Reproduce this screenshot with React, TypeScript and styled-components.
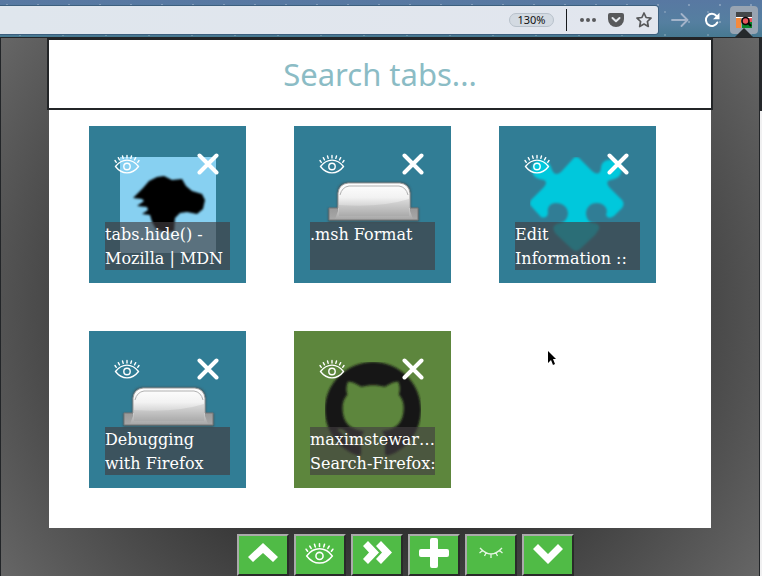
import React from "react";
import styled, { createGlobalStyle } from "styled-components";

const GlobalStyle = createGlobalStyle`
  * { box-sizing: border-box; }
  body { margin: 0; background: #f0f0f1; font-family: "DejaVu Serif", serif; overflow: hidden; }
  svg { display: block; }
`;

const Window = styled.div`
  min-height: 100vh;
  display: flex;
  flex-direction: column;
`;

const Toolbar = styled.header`
  position: relative;
  height: 37px;
  flex: none;
  display: flex;
  align-items: center;
  padding: 3px 4px 0 0;
  background:
    radial-gradient(circle at 7px 5px, #ffffff40 0 1px, transparent 1px) 0 0 / 31px 17px,
    radial-gradient(circle at 20px 12px, #ffffff30 0 1px, transparent 1px) 0 0 / 43px 23px,
    linear-gradient(180deg, #5878a2, #557fa0 60%, #477991);
`;

const AddressBar = styled.div`
  flex: 1;
  height: 28px;
  display: flex;
  align-items: center;
  justify-content: flex-end;
  border-radius: 0 3px 3px 0;
  background: linear-gradient(90deg, #dfe6ed, #e2e6ee);
  box-shadow: 0 0 0 1px #3c5f7e;
`;

const IconButton = styled.button<{ $width: number; $active?: boolean }>`
  width: ${(p) => p.$width}px;
  height: 28px;
  padding: 0;
  border: 0;
  border-radius: 4px;
  display: flex;
  align-items: center;
  justify-content: center;
  background: ${(p) => (p.$active ? "#98a4b2" : "transparent")};
`;

const ZoomLevel = styled.button`
  width: 45px;
  height: 14px;
  margin-right: 12px;
  padding: 0;
  border: 1px solid #b8c1cb;
  border-radius: 8px;
  background: #d3dae2;
  color: #111;
  font: 11px/12px "Noto Sans", sans-serif;
`;

const Divider = styled.span`
  width: 1px;
  height: 22px;
  margin-right: 7px;
  background: #16191c;
`;

const AddressGap = styled.span`
  width: 8px;
`;

const PopupArrow = styled.span`
  position: absolute;
  right: 9px;
  bottom: 0;
  border: solid transparent;
  border-width: 0 9px 9px;
  border-bottom-color: #25292c;
`;

const Popup = styled.main`
  flex: 1;
  margin-right: 2px;
  padding: 0 46px;
  display: flex;
  flex-direction: column;
  border: 1px solid #222528;
  border-bottom: 0;
  background: radial-gradient(circle, #000, #666);
`;

const Backdrop = styled.div`
  flex: 1;
  display: flex;
  flex-direction: column;
  background: linear-gradient(#25282b 0 74px, #f0f0f1 74px);
`;

const SearchInput = styled.input`
  width: 100%;
  height: 72px;
  padding: 0;
  border: 2px solid #232527;
  border-radius: 0;
  outline: 0;
  background: #fff;
  text-align: center;
  font: 31px/40px "Noto Sans", sans-serif;
  &::placeholder { color: #8bbcc5; opacity: 1; }
`;

const Panel = styled.section`
  flex: 1;
  margin: 0 2px;
  padding: 16px 40px 40px;
  background: #fff;
`;

const TabGrid = styled.ul`
  margin: 0;
  padding: 0;
  list-style: none;
  display: grid;
  grid-template-columns: repeat(auto-fill, 157px);
  gap: 48px;
`;

const Card = styled.li<{ $color: string }>`
  position: relative;
  height: 157px;
  padding: 24px 16px 13px;
  display: flex;
  flex-direction: column;
  justify-content: space-between;
  background: ${(p) => p.$color};
`;

const Favicon = styled.svg`
  position: absolute;
  left: 31px;
  top: 31px;
`;

const CardActions = styled.div`
  position: relative;
  display: flex;
  justify-content: space-between;
  padding: 0 11px 0 9px;
`;

const CardButton = styled.button`
  height: 28px;
  padding: 0;
  border: 0;
  background: none;
  display: flex;
  align-items: center;
  color: #fff;
`;

const Title = styled.p`
  position: relative;
  height: 48px;
  margin: 0;
  padding-top: 1px;
  white-space: pre;
  background: rgba(66, 62, 64, 0.65);
  color: #fff;
  font-size: 16px;
  line-height: 24px;
`;

const Actions = styled.nav`
  display: flex;
  justify-content: center;
  gap: 5px;
  padding: 6px 0 0 50px;
`;

const ActionButton = styled.button`
  width: 52px;
  height: 42px;
  padding: 0 0 4px;
  display: flex;
  align-items: center;
  justify-content: center;
  border: 2px solid;
  border-color: #aaa #292b29 #292b29 #aaa;
  background: #50bb46;
  color: #fff;
`;

const OpenEye = ({ width }: { width: number }) => (
  <svg width={width} height={(width * 20) / 26} viewBox="0 0 26 20" fill="none" stroke="currentColor" strokeLinecap="round">
    <path d="M1.500 12.500C8 4 18 4 24.500 12.500C18 21 8 21 1.500 12.500Z" strokeWidth="1.300" />
    <circle cx="13" cy="12.500" r="3.200" strokeWidth="1.400" />
    <path d="M2.300 8.300 1 6.500M5.500 5.800 4.300 3.700M9.200 4.400 8.500 2M13 4V1.500M16.800 4.400 17.500 2M20.500 5.800 21.700 3.700M23.700 8.300 25 6.500" strokeWidth="1.400" />
  </svg>
);

const ClosedEye = () => (
  <svg width="26" height="12" viewBox="0 0 26 12" fill="none" stroke="#e4f5e2" strokeWidth="1.300">
    <path d="M2 1Q13 13 24 1M4.500 3.500 1.500 6M8 6 6.500 9M13 7V11M18 6 19.500 9M21.500 3.500 24.500 6" />
  </svg>
);

const Cross = () => (
  <svg width="22" height="22" viewBox="0 0 22 22" stroke="currentColor" strokeWidth="4" strokeLinecap="round">
    <path d="M2.500 2.500 19.500 19.500M19.500 2.500 2.500 19.500" />
  </svg>
);

const Soften = ({ id }: { id: string }) => (
  <filter id={id}><feGaussianBlur stdDeviation="1" /></filter>
);

const MdnIcon = () => (
  <Favicon width="96" height="96" viewBox="0 0 96 96">
    <Soften id="mdn-soft" />
    <path fill="#87d0f1" d="M0 0H96V96H0Z" />
    <path filter="url(#mdn-soft)" d="M13 41 23 31 29 24 37 20 44 19 52 23 62 22 66 29 72 34 82 37 85 43 83 52 77 57 67 55 60 56 55 61 54 74 45 76 36 72 32 65 30 58 22 57 28 53 27 50 17 49 24 44 22 42Z" />
  </Favicon>
);

const DriveIcon = ({ id }: { id: string }) => (
  <Favicon width="96" height="96" viewBox="0 0 96 96">
    <defs>
      <linearGradient id={`${id}-body`} x2="0" y2="1">
        <stop stopColor="#fff" /><stop offset=".4" stopColor="#f2f2f2" /><stop offset="1" stopColor="#a8a8a8" />
      </linearGradient>
      <linearGradient id={`${id}-base`} x2="0" y2="1">
        <stop stopColor="#999" /><stop offset="1" stopColor="#a8a8a8" />
      </linearGradient>
      <filter id={`${id}-shadow`}><feGaussianBlur stdDeviation="1" /></filter>
    </defs>
    <path filter={`url(#${id}-shadow)`} fill="#3c5a64" d="M3 51H12V35Q13 26 22 25H76Q85 26 86 35V51H94V65H3Z" />
    <path fill={`url(#${id}-base)`} stroke="#777" d="M4 51H93V63H4Z" />
    <path fill={`url(#${id}-body)`} d="M13 54V36Q14 27 23 26H75Q84 27 85 36V54L88 62H10Z" />
    <path fill="none" stroke="#999" d="M13 51V36Q14 27 23 26H75Q84 27 85 36V51" />
    <path fill="none" stroke="#b0b0b0" d="M15 38Q17 30 24 29H74Q81 30 83 38" />
    <path fill="#888" opacity=".18" d="M14 48Q55 51 84 42V59H14Z" />
  </Favicon>
);

const PuzzleIcon = () => (
  <Favicon width="96" height="96" viewBox="0 0 96 96">
    <Soften id="puzzle-soft" />
    <path filter="url(#puzzle-soft)" fill="#00c8dc" d="M46 0Q49 0 51 3L62 14Q69 20 71 12C71 5 76 2 84 3C91 3 93 9 91 16C89 22 82 22 78 24Q76 27 80 31L92 43Q95 47 92 51L84 59Q78 63 76 58C79 52 74 46 67 46C58 46 54 54 57 61Q59 66 64 66Q70 67 69 72L65 78 50 92Q46 96 42 92L27 78Q22 73 24 69Q27 66 31 66Q37 64 38 57C38 50 33 46 26 46C19 46 17 52 18 56Q17 62 11 60L1 49Q-1 47 1 43L14 30Q18 25 14 23C7 22 3 20 2 14C1 7 5 3 11 3C18 3 20 7 22 13Q25 20 31 15L42 3Q44 0 46 0Z" />
  </Favicon>
);

const GithubIcon = () => (
  <Favicon width="96" height="96" viewBox="0 0 16 16">
    <filter id="github-soft"><feGaussianBlur stdDeviation=".14" /></filter>
    <path filter="url(#github-soft)" fill="#191717" d="M8 0C3.580 0 0 3.580 0 8c0 3.540 2.290 6.530 5.470 7.590.4.070.55-.17.55-.38 0-.19-.01-.82-.01-1.490-2.010.37-2.530-.49-2.690-.94-.09-.23-.48-.94-.82-1.130-.28-.15-.68-.52-.01-.53.63-.01 1.080.58 1.230.82.72 1.210 1.870.87 2.330.66.07-.52.28-.87.51-1.070-1.780-.2-3.640-.89-3.640-3.950 0-.87.31-1.590.82-2.150-.08-.2-.36-1.020.08-2.120 0 0 .67-.21 2.200.82.64-.18 1.320-.27 2-.27.68 0 1.360.09 2 .27 1.530-1.040 2.200-.82 2.200-.82.44 1.100.16 1.920.08 2.120.51.56.82 1.270.82 2.150 0 3.070-1.870 3.750-3.650 3.950.29.25.54.73.54 1.480 0 1.070-.01 1.930-.01 2.200 0 .21.15.46.55.38A8.013 8.013 0 0016 8c0-4.420-3.580-8-8-8z" />
  </Favicon>
);

const Pointer = styled.svg`
  position: fixed;
  left: 548px;
  top: 351px;
`;

const tabs = [
  { title: "tabs.hide() -\nMozilla | MDN", color: "#317d95", icon: <MdnIcon /> },
  { title: ".msh Format", color: "#317d95", icon: <DriveIcon id="format" /> },
  { title: "Edit\nInformation ::", color: "#317d95", icon: <PuzzleIcon /> },
  { title: "Debugging\nwith Firefox", color: "#317d95", icon: <DriveIcon id="debug" /> },
  { title: "maximstewar…\nSearch-Firefox:", color: "#5d863d", icon: <GithubIcon /> },
];

const Glyph = ({ d }: { d: string }) => (
  <svg width="32" height="32" viewBox="0 0 32 32" fill="currentColor"><path d={d} /></svg>
);

const actions = [
  { label: "Scroll up", icon: <Glyph d="M16 6 31 20 26 25 16 16 6 25 1 20Z" /> },
  { label: "Show tabs", icon: <OpenEye width={29} /> },
  { label: "Forward", icon: <Glyph d="M2 9 7 4 18 15.500 7 27 2 22 8 15.500ZM15 9 20 4 31 15.500 20 27 15 22 21 15.500Z" /> },
  { label: "New tab", icon: <Glyph d="M14 1H18Q20 1 20 3V12H29Q31 12 31 14V18Q31 20 29 20H20V29Q20 31 18 31H14Q12 31 12 29V20H3Q1 20 1 18V14Q1 12 3 12H12V3Q12 1 14 1Z" /> },
  { label: "Hide tabs", icon: <ClosedEye /> },
  { label: "Scroll down", icon: <Glyph d="M16 27 31 12 26 7 16 17 6 7 1 12Z" /> },
];

export default function App() {
  return (
    <Window>
      <GlobalStyle />
      <Toolbar>
        <AddressBar>
          <ZoomLevel>130%</ZoomLevel>
          <Divider />
          <IconButton $width={28} aria-label="Page actions">
            <svg width="16" height="4" viewBox="0 0 16 4" fill="#58595b">
              <circle cx="2" cy="2" r="2" /><circle cx="8" cy="2" r="2" /><circle cx="14" cy="2" r="2" />
            </svg>
          </IconButton>
          <IconButton $width={28} aria-label="Save to Pocket">
            <svg width="16" height="14" viewBox="0 0 16 14">
              <path fill="#58595b" d="M2 0H14Q16 0 16 2V6A8 8 0 0 1 0 6V2Q0 0 2 0Z" />
              <path fill="none" stroke="#e5e9ee" strokeWidth="2" strokeLinecap="round" strokeLinejoin="round" d="m4.500 5 3.500 3.300L11.500 5" />
            </svg>
          </IconButton>
          <IconButton $width={28} aria-label="Bookmark this page">
            <svg width="16" height="16" viewBox="0 0 16 16" fill="none" stroke="#58595b" strokeWidth="1.700" strokeLinejoin="round">
              <path d="m8 1 2.100 4.500 4.900.6-3.600 3.400.9 5L8 12.100 3.700 14.500l.9-5L1 6.100l4.900-.6Z" />
            </svg>
          </IconButton>
        </AddressBar>
        <AddressGap />
        <IconButton $width={28} aria-label="Forward">
          <svg width="18" height="14" viewBox="0 0 18 14" fill="none" stroke="#a3b4ca" strokeWidth="1.800" strokeLinecap="round" strokeLinejoin="round">
            <path d="M1 7H16M10.500 1 16.500 7 10.500 13" />
          </svg>
        </IconButton>
        <IconButton $width={36} aria-label="Reload">
          <svg width="16" height="16" viewBox="0 0 16 16" fill="none" stroke="#fff" strokeWidth="2">
            <path d="M13.300 10.500A6 6 0 1 1 12.500 4" strokeLinecap="round" />
            <path fill="#fff" stroke="none" d="M15.500.8V7.300H9Z" />
          </svg>
        </IconButton>
        <IconButton $width={28} $active aria-label="Search tabs">
          <svg width="16" height="16" viewBox="0 0 16 16">
            <path fill="#444749" d="M0 0H16V5H0Z" />
            <path fill="#fff" d="M0 5H16V6H0Z" />
            <path fill="#f58a3c" d="M0 6H5V16H0Z" />
            <path fill="#e8545c" d="M6 6H16V10H6Z" />
            <path fill="#08842c" d="M6 10H16V16H6Z" />
            <circle cx="9.500" cy="9" r="3.500" fill="#e8545c" stroke="#080808" strokeWidth="1.600" />
            <path stroke="#080808" strokeWidth="2" d="m12 11 3 3" />
          </svg>
        </IconButton>
        <PopupArrow />
      </Toolbar>
      <Backdrop>
        <Popup>
          <SearchInput type="text" aria-label="Search tabs" placeholder="Search tabs..." />
          <Panel>
            <TabGrid>
              {tabs.map((tab) => (
                <Card key={tab.title} $color={tab.color}>
                  {tab.icon}
                  <CardActions>
                    <CardButton aria-label={`Hide ${tab.title}`}><OpenEye width={26} /></CardButton>
                    <CardButton aria-label={`Close ${tab.title}`}><Cross /></CardButton>
                  </CardActions>
                  <Title>{tab.title}</Title>
                </Card>
              ))}
            </TabGrid>
          </Panel>
          <Actions aria-label="Tab actions">
            {actions.map((a) => (
              <ActionButton key={a.label} aria-label={a.label}>{a.icon}</ActionButton>
            ))}
          </Actions>
        </Popup>
      </Backdrop>
      <Pointer width="9" height="15" viewBox="0 0 9 15" aria-hidden="true">
        <path d="M0 0 8 8H5L7 13 5 14 3 9 0 12Z" />
      </Pointer>
    </Window>
  );
}
